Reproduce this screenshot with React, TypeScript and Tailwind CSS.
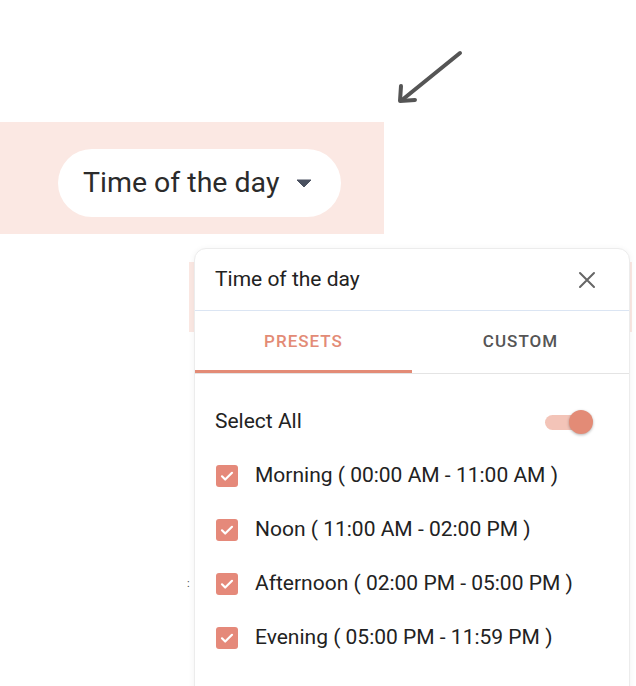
import React, { useState } from "react"

const rows = [
  "Morning ( 00:00 AM - 11:00 AM )",
  "Noon ( 11:00 AM - 02:00 PM )",
  "Afternoon ( 02:00 PM - 05:00 PM )",
  "Evening ( 05:00 PM - 11:59 PM )",
]

function Check() {
  return (
    <span className="flex h-[22px] w-[22px] shrink-0 items-center justify-center rounded-[3px] bg-[#e5897a]">
      <svg width="16" height="16" viewBox="0 0 16 16" fill="none">
        <path d="M3 8.3l3.2 3.2L13 4.8" stroke="white" strokeWidth="2.2" strokeLinecap="round" strokeLinejoin="round" />
      </svg>
    </span>
  )
}

export default function App() {
  const [tab, setTab] = useState<"presets" | "custom">("presets")
  const [all, setAll] = useState(true)

  return (
    <div
      className="relative h-[686px] w-[636px] overflow-hidden bg-white text-[#222]"
      style={{ fontFamily: "Roboto, 'Noto Sans', sans-serif" }}
    >
      {/* pointer arrow */}
      <svg className="absolute left-[392px] top-[46px]" width="76" height="62" viewBox="0 0 76 62" fill="none">
        <path d="M68 7L10 54" stroke="#555" strokeWidth="4" strokeLinecap="round" />
        <path d="M9 40L8 55L23 54" stroke="#555" strokeWidth="4" strokeLinecap="round" strokeLinejoin="round" />
      </svg>

      {/* trigger band */}
      <div className="mt-[122px] h-[112px] w-[384px] bg-[#fbe8e3] pl-[58px] pt-[27px]">
        <button className="flex h-[68px] w-[283px] items-center gap-[17px] rounded-full bg-white pl-[25px] text-[28.5px] text-[#2b2b2b]">
          <span>Time of the day</span>
          <svg width="16" height="9" viewBox="0 0 16 9" className="mt-[1px]">
            <path d="M1 1h14l-7 7z" fill="#4a5160" stroke="#4a5160" strokeLinejoin="round" />
          </svg>
        </button>
      </div>

      {/* row behind the popover */}
      <div className="absolute left-[189px] top-[262px] h-[70px] w-[443px] bg-[#fbe8e3]" />
      <span className="absolute left-[187px] top-[578px] text-[11px] leading-none text-[#444]">:</span>

      {/* popover */}
      <div className="absolute bottom-[-8px] left-[194px] top-[248px] w-[436px] rounded-t-[12px] border border-[#ececec] bg-white shadow-[0_1px_6px_rgba(0,0,0,0.06)]">
        <div className="flex h-[62px] items-center justify-between border-b border-[#dbe5f3] pl-[20px] pr-[33px]">
          <span className="text-[21px]">Time of the day</span>
          <svg width="18" height="18" viewBox="0 0 18 18">
            <path d="M2 2l14 14M16 2L2 16" stroke="#666" strokeWidth="2" strokeLinecap="round" />
          </svg>
        </div>

        <div className="grid h-[63px] grid-cols-[217px_1fr] border-b border-[#e4e4e4]">
          <button
            onClick={() => setTab("presets")}
            className={`relative text-[17px] font-medium tracking-[0.06em] ${tab === "presets" ? "text-[#e38b76]" : "text-[#555]"}`}
          >
            PRESETS
            {tab === "presets" && <span className="absolute bottom-0 left-0 h-[3px] w-full bg-[#e38b76]" />}
          </button>
          <button
            onClick={() => setTab("custom")}
            className={`relative text-[17px] font-medium tracking-[0.06em] ${tab === "custom" ? "text-[#e38b76]" : "text-[#555]"}`}
          >
            CUSTOM
            {tab === "custom" && <span className="absolute bottom-0 left-0 h-[3px] w-full bg-[#e38b76]" />}
          </button>
        </div>

        <div className="pl-[20px] pr-[42px] pt-[21px]">
          <div className="flex h-[54px] items-center justify-between">
            <span className="text-[21px]">Select All</span>
            <button onClick={() => setAll(!all)} className="relative h-[15px] w-[42px] rounded-full bg-[#f3c4b8]">
              <span
                className={`absolute top-1/2 h-[24px] w-[24px] -translate-y-1/2 rounded-full bg-[#e38b76] shadow-[0_1px_3px_rgba(0,0,0,0.3)] ${all ? "right-[-6px]" : "left-[-6px]"}`}
              />
            </button>
          </div>
          {rows.map((r) => (
            <div key={r} className="flex h-[54px] items-center gap-[17px] pl-[1px]">
              <Check />
              <span className="text-[21px]">{r}</span>
            </div>
          ))}
        </div>
      </div>
    </div>
  )
}
